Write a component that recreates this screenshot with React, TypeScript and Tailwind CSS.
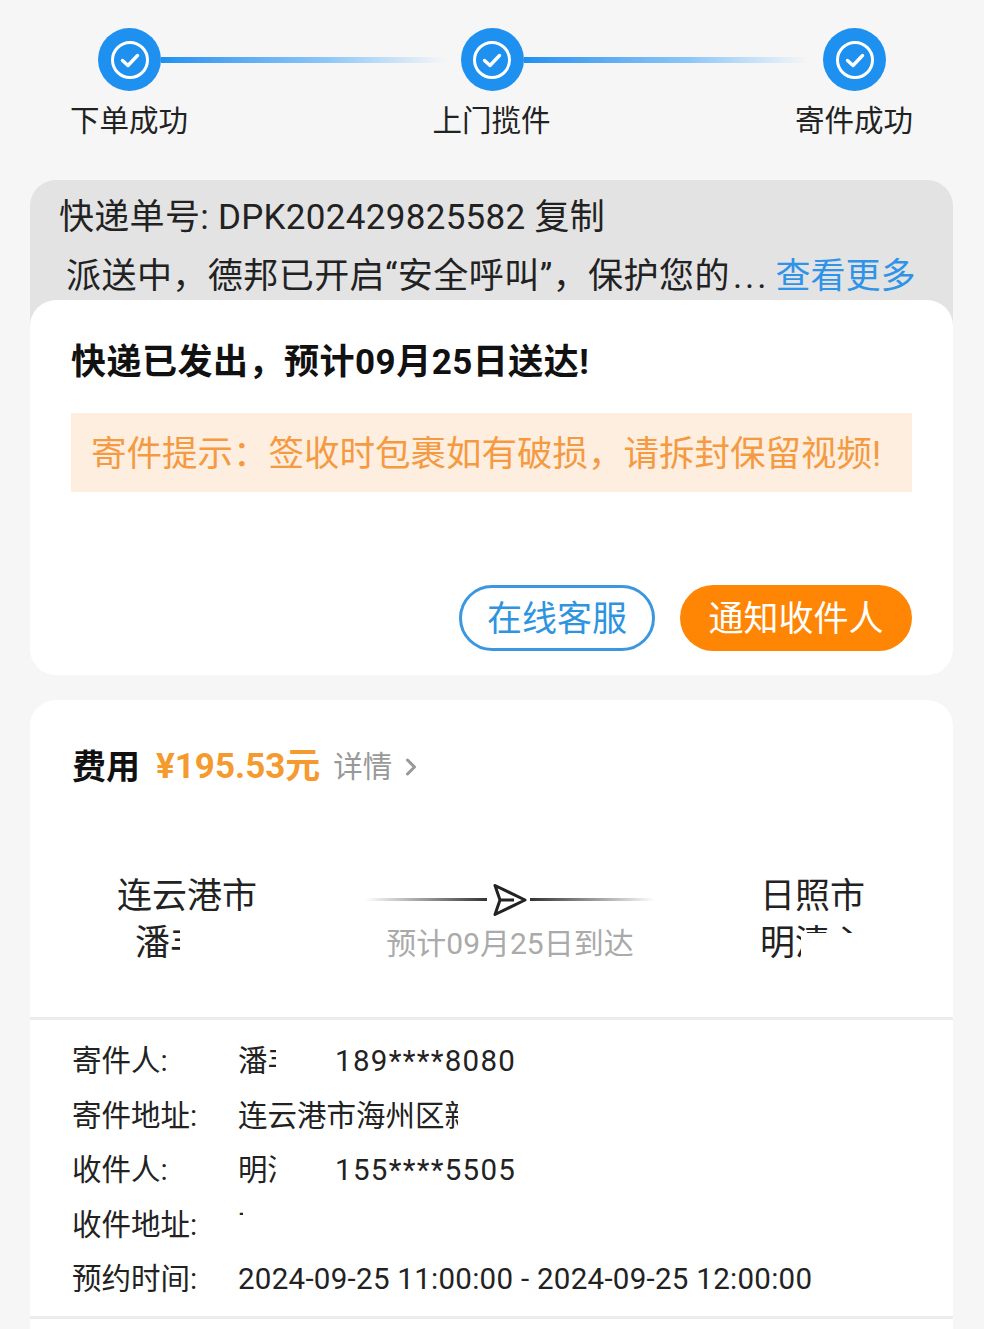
import { ChevronRight } from 'lucide-react';

const STEPS = ['下单成功', '上门揽件', '寄件成功'];

function StepDot() {
  return (
    <div className="flex h-[63px] w-[63px] shrink-0 items-center justify-center rounded-full bg-[#1e90f0]">
      <svg width="40" height="40" viewBox="0 0 40 40" fill="none" stroke="#fff">
        <circle cx="20" cy="20" r="17.5" strokeWidth="3" />
        <path d="M12.5 20.5l5.5 5L27.5 15.5" strokeWidth="3.4" strokeLinecap="round" strokeLinejoin="round" />
      </svg>
    </div>
  );
}

function StepLine() {
  return <div className="h-[6px] flex-1 bg-gradient-to-r from-[#1e90f0] via-[#8cc6f6] via-55% to-[#f6f6f6] to-95%" />;
}

function InfoRow({ label, children }: { label: string; children: React.ReactNode }) {
  return (
    <div className="flex h-[54.5px] items-center text-[29.5px] text-[#222]">
      <span className="w-[166px] shrink-0">{label}</span>
      {children}
    </div>
  );
}

function Clipped({ text, width }: { text: string; width: string }) {
  return <span className={`${width} block shrink-0 overflow-hidden whitespace-nowrap`}>{text}</span>;
}

export default function App() {
  return (
    <div className="h-[1329px] w-[984px] overflow-hidden bg-[#f6f6f6] font-['Roboto','Noto_Sans_CJK_SC',sans-serif]">
      {/* Progress */}
      <div className="flex items-center px-[98px] pt-[28px]">
        <StepDot />
        <StepLine />
        <StepDot />
        <StepLine />
        <StepDot />
      </div>
      <div className="flex justify-between pl-[70px] pr-[71px] pt-[8px] text-[29.5px] leading-[44px] text-[#222]">
        {STEPS.map((s) => (
          <span key={s}>{s}</span>
        ))}
      </div>

      {/* Tracking */}
      <div className="ml-[30px] mr-[31px] mt-[37px] h-[150px] rounded-t-[26px] bg-[#e3e3e3] text-[35px] text-[#222]">
        <div className="pl-[29px] pt-[13px] leading-[50px] tracking-[0.3px]">快递单号: DPK202429825582 复制</div>
        <div className="flex whitespace-nowrap pl-[36px] pt-[9px] leading-[50px]">
          <span className="tracking-[0.45px]">派送中，德邦已开启“安全呼叫”，保护您的</span>
          <span className="ml-[3px] tracking-[3px]">...</span>
          <span className="ml-[6px] text-[#2f94e8]">查看更多</span>
        </div>
      </div>

      {/* Status card */}
      <div className="relative ml-[30px] mr-[31px] -mt-[30px] h-[375px] rounded-[26px] bg-white px-[41px]">
        <div className="pt-[38px] text-[35px] font-bold leading-[50px] tracking-[0.5px] text-[#111]">快递已发出，预计09月25日送达!</div>
        <div className="mt-[25px] flex h-[79px] items-center whitespace-nowrap bg-[#fdeee0] pl-[20px] pt-[5px] text-[35.5px] text-[#f59a40]">
          寄件提示：签收时包裹如有破损，请拆封保留视频!
        </div>
        <div className="mt-[93px] flex justify-end gap-[25px]">
          <button className="h-[66px] w-[196px] rounded-full border-[3px] border-[#3b97e0] pt-[5px] text-[35px] text-[#2f94e0]">在线客服</button>
          <button className="h-[66px] w-[232px] rounded-full bg-[#ff8504] pt-[5px] text-[35px] text-white">通知收件人</button>
        </div>
      </div>

      {/* Order card */}
      <div className="ml-[30px] mr-[31px] mt-[25px] rounded-t-[26px] bg-white">
        <div className="flex items-center pl-[42px] pt-[42px]">
          <span className="text-[34px] font-bold leading-[50px] text-[#111]">费用</span>
          <span className="ml-[16px] text-[35px] font-bold leading-[50px] text-[#f59a2e]">¥195.53元</span>
          <span className="ml-[13px] text-[29.5px] leading-[50px] text-[#999]">详情</span>
          <ChevronRight className="ml-[5px] h-[28px] w-[28px] text-[#999]" strokeWidth={2.6} />
        </div>

        <div className="flex h-[228px] border-b-[3px] border-[#ececec] pt-[81px]">
          <div className="w-[335px] pl-[87px] text-[35px] leading-[47px] text-[#222]">
            <div>连云港市</div>
            <div className="pl-[18px]">
              <Clipped text="潘丰" width="w-[45px]" />
            </div>
          </div>
          <div className="w-[290px]">
            <div className="mt-[3px] flex h-[47px] items-center">
              <div className="h-[3px] w-[122px] bg-gradient-to-r from-transparent to-[#333]" />
              <svg width="36" height="34" viewBox="0 0 36 34" fill="none" stroke="#222" strokeWidth="3" strokeLinejoin="round" className="ml-[5px]">
                <path d="M3 2.5L33 17 3 31.5 8 17z" />
                <path d="M8 17h14" />
              </svg>
              <div className="ml-[2px] h-[3px] w-[125px] bg-gradient-to-r from-[#333] to-transparent" />
            </div>
            <div className="-mt-[3px] whitespace-nowrap text-center text-[30px] leading-[47px] text-[#aaa]">预计09月25日到达</div>
          </div>
          <div className="pl-[105px] text-[35px] leading-[47px] text-[#222]">
            <div className="whitespace-nowrap">日照市</div>
            <div className="relative h-[47px] w-[100px] overflow-hidden whitespace-nowrap">
              明清心
              <div className="absolute bottom-0 left-[41px] right-0 top-[13px] bg-white" />
            </div>
          </div>
        </div>

        <div className="pl-[42px] pt-[14px]">
          <InfoRow label="寄件人:">
            <Clipped text="潘丰" width="w-[38px]" />
            <span className="ml-[59px] tracking-[1.3px]">189****8080</span>
          </InfoRow>
          <InfoRow label="寄件地址:">
            <Clipped text="连云港市海州区新" width="w-[220px]" />
          </InfoRow>
          <InfoRow label="收件人:">
            <Clipped text="明清" width="w-[38px]" />
            <span className="ml-[59px] tracking-[1.3px]">155****5505</span>
          </InfoRow>
          <InfoRow label="收件地址:">
            <Clipped text="丁" width="w-[5px]" />
          </InfoRow>
          <InfoRow label="预约时间:">
            <span className="whitespace-nowrap tracking-[0.28px]">2024-09-25 11:00:00 - 2024-09-25 12:00:00</span>
          </InfoRow>
        </div>
        <div className="mt-[9px] h-[3px] bg-[#ececec]" />
        <div className="h-[40px]" />
      </div>
    </div>
  );
}
